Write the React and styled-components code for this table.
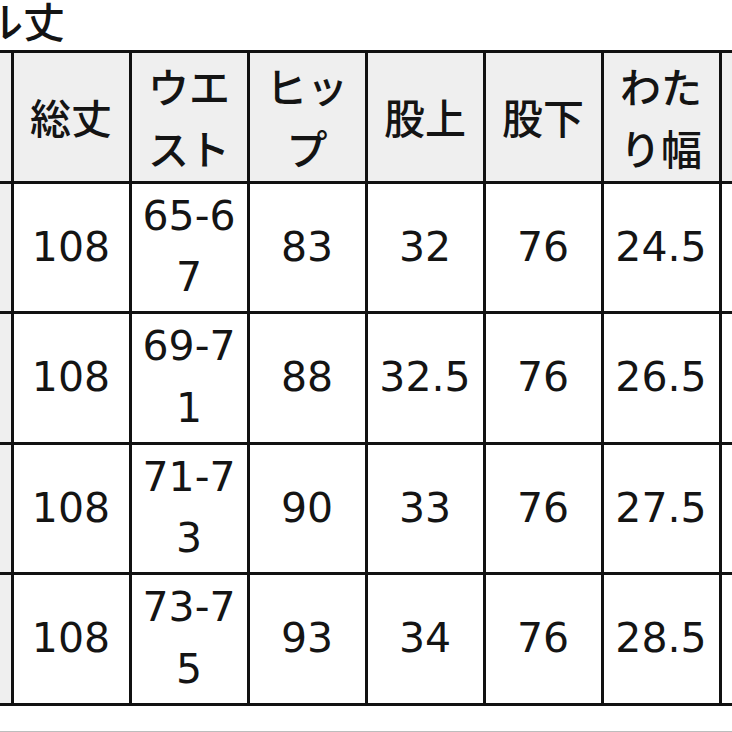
import React from "react";
import styled, { createGlobalStyle } from "styled-components";

const GlobalStyle = createGlobalStyle`
  html, body {
    margin: 0;
    padding: 0;
    background: #ffffff;
  }
  body {
    font-family: "DejaVu Sans", "Noto Sans CJK JP", sans-serif;
    color: #141414;
  }
`;

const lineWidth = 3;
const cellWidth = 115;

const Page = styled.div`
  width: 732px;
  height: 732px;
  overflow: hidden;
  display: flex;
  flex-direction: column;
`;

const Title = styled.h2`
  margin: 0;
  height: 49.5px;
  flex: none;
  font-family: "Noto Sans CJK JP", sans-serif;
  font-weight: 500;
  font-size: 42px;
  line-height: 40px;
  text-indent: -19px;
  white-space: nowrap;
`;

const Sheet = styled.div`
  flex: none;
  display: grid;
  grid-template-columns: repeat(${(p) => p.cols}, ${cellWidth}px);
  grid-template-rows: 128px repeat(${(p) => p.rows}, 127.5px);
  gap: ${lineWidth}px;
  width: max-content;
  margin-left: -107.5px;
  border: ${lineWidth}px solid #111;
  background: #111;
`;

const Cell = styled.div`
  display: flex;
  align-items: center;
  justify-content: center;
  text-align: center;
  word-break: break-all;
  background: ${(p) => (p.head ? "#efefef" : "#ffffff")};
  font-family: ${(p) =>
    p.head ? `"Noto Sans CJK JP", sans-serif` : `"DejaVu Sans", "Noto Sans CJK JP", sans-serif`};
  font-weight: ${(p) => (p.head ? 500 : 400)};
  font-size: 41px;
  line-height: 61.5px;
`;

const Rule = styled.div`
  flex: none;
  margin-top: 25.5px;
  height: 1px;
  background: #bdbdbd;
`;

// first and last columns run off the edges of the view; their labels are not shown
const columns = ["", "総丈", "ウエスト", "ヒップ", "股上", "股下", "わたり幅", ""];

const rows = [
  ["", "108", "65-67", "83", "32", "76", "24.5", ""],
  ["", "108", "69-71", "88", "32.5", "76", "26.5", ""],
  ["", "108", "71-73", "90", "33", "76", "27.5", ""],
  ["", "108", "73-75", "93", "34", "76", "28.5", ""],
];

export default function App() {
  return (
    <>
      <GlobalStyle />
      <Page>
        <Title>ル丈</Title>
        <Sheet cols={columns.length} rows={rows.length}>
          {columns.map((c, i) => (
            <Cell key={"h" + i} head>
              {c}
            </Cell>
          ))}
          {rows.map((r, ri) =>
            r.map((v, i) => (
              <Cell key={ri + "-" + i} head={i === 0}>
                {v}
              </Cell>
            ))
          )}
        </Sheet>
        <Rule />
      </Page>
    </>
  );
}
